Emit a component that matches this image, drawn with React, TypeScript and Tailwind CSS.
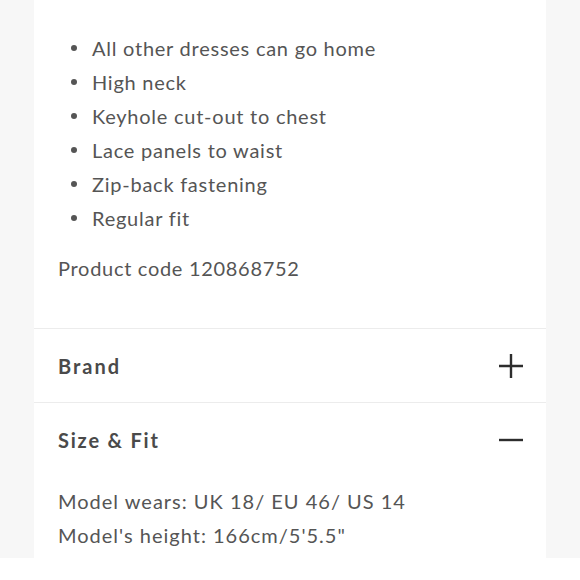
import React from "react";

const bullets = [
  "All other dresses can go home",
  "High neck",
  "Keyhole cut-out to chest",
  "Lace panels to waist",
  "Zip-back fastening",
  "Regular fit",
];

function PlusIcon() {
  return (
    <svg width="26" height="26" viewBox="0 0 26 26" fill="none">
      <path d="M13 1v24M1 13h24" stroke="#2d2d2d" strokeWidth="2.4" />
    </svg>
  );
}

function MinusIcon() {
  return (
    <svg width="26" height="26" viewBox="0 0 26 26" fill="none">
      <path d="M1 13h24" stroke="#2d2d2d" strokeWidth="2.4" />
    </svg>
  );
}

export default function App() {
  return (
    <div className="min-h-[580px] bg-white" style={{ fontFamily: '"Lato", "Noto Sans", sans-serif' }}>
      <div className="bg-[#f7f7f7] h-[558px] px-[34px]">
        <div className="bg-white h-full">
          {/* Product details */}
          <div className="pl-6 pr-6 pt-[31px] pb-[43px]">
            <ul className="text-[20px] leading-[34px] text-[#555] tracking-[0.75px]">
              {bullets.map((b) => (
                <li key={b} className="flex items-center">
                  <span className="w-[6px] h-[6px] rounded-full bg-[#555] ml-[13px] mr-[15px]" />
                  {b}
                </li>
              ))}
            </ul>
            <p className="mt-4 text-[20px] leading-[34px] text-[#555] tracking-[0.7px]">
              Product code 120868752
            </p>
          </div>

          <div className="border-t border-[#ececec] h-[74px] flex items-center justify-between pl-6 pr-[22px]">
            <span className="text-[20px] font-bold text-[#4a4a4a] tracking-[2px]">Brand</span>
            <PlusIcon />
          </div>

          <div className="border-t border-[#ececec] h-[74px] flex items-center justify-between pl-6 pr-[22px]">
            <span className="text-[20px] font-bold text-[#4a4a4a] tracking-[1.8px]">Size &amp; Fit</span>
            <MinusIcon />
          </div>

          <div className="pl-6 pt-2 text-[20px] leading-[34px] text-[#555] tracking-[1px]">
            <p>Model wears: UK 18/ EU 46/ US 14</p>
            <p>Model's height: 166cm/5'5.5"</p>
          </div>
        </div>
      </div>
    </div>
  );
}
